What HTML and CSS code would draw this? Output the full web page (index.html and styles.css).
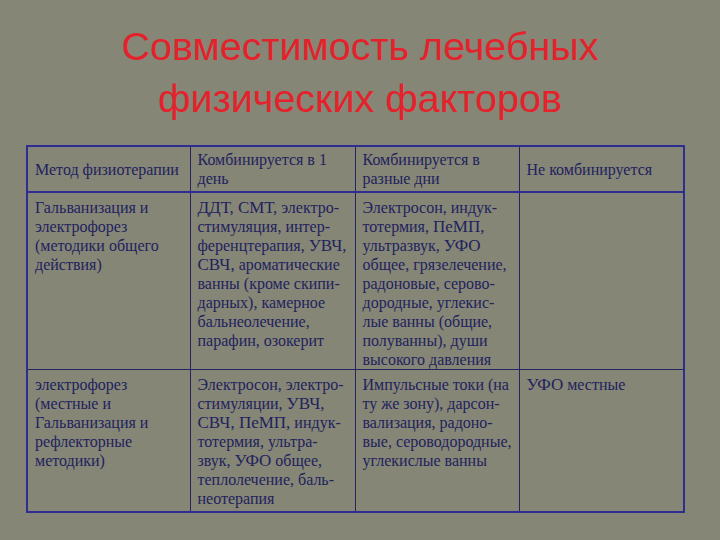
FILE: index.html
```html
<!DOCTYPE html>
<html lang="ru">
<head>
<meta charset="utf-8">
<link rel="stylesheet" href="styles.css">
</head>
<body>
<div class="slide">
  <h1 class="title">Совместимость лечебных<br>физических факторов</h1>
  <table class="grid">
    <colgroup>
      <col class="c1"><col class="c2"><col class="c3"><col class="c4">
    </colgroup>
    <tr class="head">
      <td>Метод физиотерапии</td>
      <td>Комбинируется в 1<br>день</td>
      <td>Комбинируется в<br>разные дни</td>
      <td>Не комбинируется</td>
    </tr>
    <tr class="r2">
      <td>Гальванизация и<br>электрофорез<br>(методики общего<br>действия)</td>
      <td><span class="ab">ДДТ, СМТ,</span> электро-<br>стимуляция, интер-<br>ференцтерапия, <span class="ab">УВЧ,</span><br><span class="ab">СВЧ,</span> ароматические<br>ванны (кроме скипи-<br>дарных), камерное<br>бальнеолечение,<br>парафин, озокерит</td>
      <td>Электросон, индук-<br>тотермия, <span class="ab">ПеМП,</span><br>ультразвук, <span class="ab">УФО</span><br>общее, грязелечение,<br>радоновые, серово-<br>дородные, углекис-<br>лые ванны (общие,<br>полуванны), души<br>высокого давления</td>
      <td></td>
    </tr>
    <tr class="r3">
      <td>электрофорез<br>(местные и<br>Гальванизация и<br>рефлекторные<br>методики)</td>
      <td>Электросон, электро-<br>стимуляции, <span class="ab">УВЧ,</span><br><span class="ab">СВЧ, ПеМП,</span> индук-<br>тотермия, ультра-<br>звук, <span class="ab">УФО</span> общее,<br>теплолечение, баль-<br>неотерапия</td>
      <td>Импульсные токи (на<br>ту же зону), дарсон-<br>вализация, радоно-<br>вые, сероводородные,<br>углекислые ванны</td>
      <td><span class="ab">УФО</span> местные</td>
    </tr>
  </table>
</div>
</body>
</html>
```

FILE: styles.css
```css
html, body {
  margin: 0;
  padding: 0;
  background: #858676;
}
.slide {
  width: 720px;
  height: 540px;
  display: flex;
  flex-direction: column;
  align-items: flex-start;
}
.title {
  align-self: center;
  margin: 20px 0 0 0;
  font-family: "Liberation Sans", Arial, sans-serif;
  font-weight: normal;
  font-size: 39.5px;
  line-height: 52px;
  color: #e3222c;
  text-align: center;
}
.grid {
  margin: 21px 0 0 26px;
  width: 657px;
  border-collapse: collapse;
  border: 2px solid #2e2e92;
  font-family: "Liberation Serif", "Times New Roman", serif;
  font-size: 16px;
  line-height: 19px;
  color: #22225e;
  table-layout: fixed;
}
.c1 { width: 163px; }
.c2 { width: 165px; }
.c3 { width: 164px; }
.c4 { width: 165px; }
.grid td {
  border-left: 1px solid #24245e;
  border-right: 1px solid #24245e;
  padding: 5px 4px 0 7px;
  vertical-align: top;
}
.head td {
  height: 44px;
  vertical-align: middle;
  padding-top: 0;
  padding-bottom: 0;
  border-bottom: 2px solid #2e2e92;
}
.r2 td {
  height: 171px;
  border-bottom: 1px solid #24245e;
}
.r3 td {
  height: 136px;
}
.ab {
  font-size: 17px;
}
```
